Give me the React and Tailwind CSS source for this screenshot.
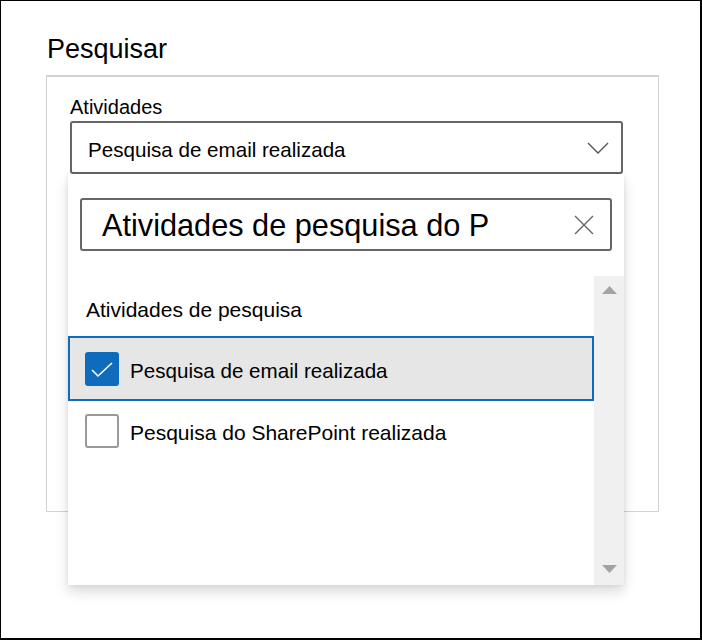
import React from "react";

function Checkbox({ checked }) {
  if (checked) {
    return (
      <div className="w-[34px] h-[34px] shrink-0 rounded-[3px] bg-[#0f6cbd] flex items-center justify-center">
        <svg width="34" height="34" viewBox="0 0 34 34">
          <polyline
            points="7,18 13,24 27,11"
            fill="none"
            stroke="white"
            strokeWidth="1.6"
          />
        </svg>
      </div>
    );
  }
  return (
    <div className="w-[34px] h-[34px] shrink-0 rounded-[3px] border-2 border-[#999999] bg-white" />
  );
}

function App() {
  return (
    <div className="w-[702px] h-[640px] bg-white border-l border-t border-r-2 border-b-2 border-black font-['Liberation_Sans',Arial,sans-serif] text-black overflow-hidden">
      <div className="pl-[45px] pt-[35px]">
        <h1 className="text-[27px] leading-[27px] ml-[1px]">Pesquisar</h1>

        {/* painel de filtros */}
        <div className="mt-[12px] w-[613px] h-[437px] border border-t-2 border-[#d2d2d2] pl-[23px] pt-[20px]">
          <div className="text-[20px] leading-[20px]">Atividades</div>

          <div className="relative mt-[4px] w-[553px]">
            <div className="h-[53px] border-2 border-[#666666] rounded-[3px] pl-[16px] pr-[12px] pt-[17px] flex items-start justify-between">
              <span className="text-[20.6px] leading-[20.5px]">
                Pesquisa de email realizada
              </span>
              <svg width="22" height="12" viewBox="0 0 22 12" className="mt-[2px]">
                <polyline
                  points="1,1 11,11 21,1"
                  fill="none"
                  stroke="#555555"
                  strokeWidth="1.4"
                />
              </svg>
            </div>

            {/* menu suspenso */}
            <div className="absolute top-full left-[-2px] w-[556px] h-[411px] bg-white shadow-[0_7px_12px_rgba(0,0,0,0.14),0_0_5px_rgba(0,0,0,0.08)] z-10 flex flex-col">
              <div className="px-[12px] pt-[24px]">
                <div className="h-[53px] border-2 border-[#666666] rounded-[3px] pl-[20px] pr-[16px] flex items-center justify-between">
                  <span className="text-[30.7px] leading-[31px] mt-[2px]">
                    Atividades de pesquisa do P
                  </span>
                  <svg width="20" height="20" viewBox="0 0 20 20">
                    <path
                      d="M1,1 L19,19 M19,1 L1,19"
                      stroke="#666666"
                      strokeWidth="1.4"
                      fill="none"
                    />
                  </svg>
                </div>
              </div>

              <div className="mt-[25px] flex flex-1">
                <div className="flex-1 flex flex-col">
                  <div className="h-[60px] pl-[18px] pt-[23px] text-[21px] leading-[21px]">
                    Atividades de pesquisa
                  </div>
                  <div className="h-[65px] border-2 border-[#0f6cbd] bg-[#e6e6e6] pl-[15px] flex items-center gap-[11px]">
                    <Checkbox checked />
                    <span className="text-[20.6px] leading-[21px] mt-[3px]">
                      Pesquisa de email realizada
                    </span>
                  </div>
                  <div className="h-[60px] pl-[17px] flex items-center gap-[11px]">
                    <Checkbox />
                    <span className="text-[21px] leading-[21px] mt-[3px]">
                      Pesquisa do SharePoint realizada
                    </span>
                  </div>
                </div>

                {/* barra de rolagem */}
                <div className="w-[30px] bg-[#f0f0f0] flex flex-col justify-between items-center py-[10px] pb-[12px]">
                  <svg width="15" height="8" viewBox="0 0 15 8">
                    <polygon points="0,8 7.5,0 15,8" fill="#a3a3a3" />
                  </svg>
                  <svg width="15" height="8" viewBox="0 0 15 8">
                    <polygon points="0,0 15,0 7.5,8" fill="#a3a3a3" />
                  </svg>
                </div>
              </div>
            </div>
          </div>
        </div>
      </div>
    </div>
  );
}

export default App;
